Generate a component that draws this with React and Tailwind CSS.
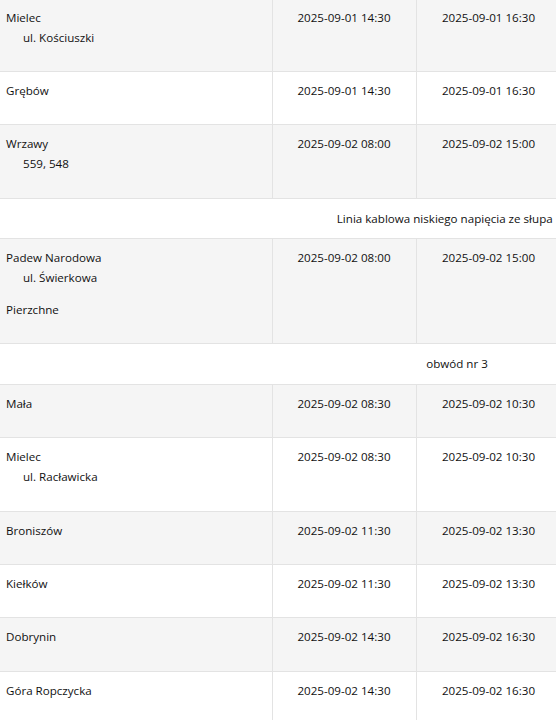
import React from "react";

const rows = [
  { type: "row", place: "Mielec", street: "ul. Kościuszki", from: "2025-09-01 14:30", to: "2025-09-01 16:30" },
  { type: "row", place: "Grębów", from: "2025-09-01 14:30", to: "2025-09-01 16:30" },
  { type: "row", place: "Wrzawy", street: "559, 548", from: "2025-09-02 08:00", to: "2025-09-02 15:00" },
  { type: "span", text: "Linia kablowa niskiego napięcia ze słupa nr 4" },
  { type: "row", place: "Padew Narodowa", street: "ul. Świerkowa", extra: "Pierzchne", from: "2025-09-02 08:00", to: "2025-09-02 15:00" },
  { type: "span", text: "obwód nr 3" },
  { type: "row", place: "Mała", from: "2025-09-02 08:30", to: "2025-09-02 10:30" },
  { type: "row", place: "Mielec", street: "ul. Racławicka", from: "2025-09-02 08:30", to: "2025-09-02 10:30" },
  { type: "row", place: "Broniszów", from: "2025-09-02 11:30", to: "2025-09-02 13:30" },
  { type: "row", place: "Kiełków", from: "2025-09-02 11:30", to: "2025-09-02 13:30" },
  { type: "row", place: "Dobrynin", from: "2025-09-02 14:30", to: "2025-09-02 16:30" },
  { type: "row", place: "Góra Ropczycka", from: "2025-09-02 14:30", to: "2025-09-02 16:30" },
];

const App = () => {
  let stripe = 0;

  return (
    <div className="w-[556px] h-[720px] overflow-hidden bg-white text-[#111] font-['Open_Sans',sans-serif] text-[11.6px] leading-[20px]">
      <table className="w-[914px] -mt-[1.5px] border-collapse table-fixed">
        <colgroup>
          <col className="w-[272px]" />
          <col className="w-[144px]" />
          <col className="w-[145px]" />
          <col />
        </colgroup>
        <tbody>
          {rows.map((r, i) => {
            // full-width caption rows reset the striping
            if (r.type === "span") {
              stripe = 0;
              return (
                <tr key={i} className="bg-white border-b border-[#e3e3e3]">
                  <td colSpan={4} className="text-center pt-[10px] pb-[9.4px] whitespace-nowrap">
                    {r.text}
                  </td>
                </tr>
              );
            }
            const grey = stripe % 2 === 0;
            stripe++;
            return (
              <tr key={i} className={`${grey ? "bg-[#f5f5f5]" : "bg-white"} border-b border-[#e3e3e3]`}>
                <td className="align-top pl-[6px] pt-[9px] pb-[23.4px] border-r border-[#e3e3e3]">
                  <div>{r.place}</div>
                  {r.street && <div className="pl-[17px]">{r.street}</div>}
                  {r.extra && <div className="mt-[12px]">{r.extra}</div>}
                </td>
                <td className="align-top text-center pt-[9px] pb-[23.4px] border-r border-[#e3e3e3]">
                  {r.from}
                </td>
                <td className="align-top text-center pt-[9px] pb-[23.4px] border-r border-[#e3e3e3]">
                  {r.to}
                </td>
                <td className="align-top pt-[9px] pb-[23.4px]"></td>
              </tr>
            );
          })}
        </tbody>
      </table>
    </div>
  );
};

export default App;
